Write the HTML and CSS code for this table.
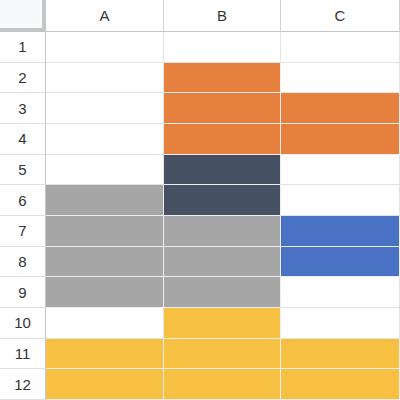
FILE: index.html
```html
<!DOCTYPE html>
<html lang="en">
<head>
<meta charset="utf-8">
<title>Sheet</title>
<link rel="stylesheet" href="styles.css">
</head>
<body>
<div class="sheet">
  <div class="corner"></div>
  <div class="colhead">A</div>
  <div class="colhead">B</div>
  <div class="colhead">C</div>

  <div class="rowhead">1</div><div class="cell"></div><div class="cell"></div><div class="cell"></div>
  <div class="rowhead">2</div><div class="cell"></div><div class="cell orange"></div><div class="cell"></div>
  <div class="rowhead">3</div><div class="cell"></div><div class="cell orange"></div><div class="cell orange"></div>
  <div class="rowhead">4</div><div class="cell"></div><div class="cell orange"></div><div class="cell orange"></div>
  <div class="rowhead">5</div><div class="cell"></div><div class="cell slate"></div><div class="cell"></div>
  <div class="rowhead">6</div><div class="cell gray"></div><div class="cell slate"></div><div class="cell"></div>
  <div class="rowhead">7</div><div class="cell gray"></div><div class="cell gray"></div><div class="cell blue"></div>
  <div class="rowhead">8</div><div class="cell gray"></div><div class="cell gray"></div><div class="cell blue"></div>
  <div class="rowhead">9</div><div class="cell gray"></div><div class="cell gray"></div><div class="cell"></div>
  <div class="rowhead">10</div><div class="cell"></div><div class="cell yellow"></div><div class="cell"></div>
  <div class="rowhead">11</div><div class="cell yellow"></div><div class="cell yellow"></div><div class="cell yellow"></div>
  <div class="rowhead">12</div><div class="cell yellow"></div><div class="cell yellow"></div><div class="cell yellow"></div>
</div>
</body>
</html>
```
FILE: styles.css
```css
html, body {
  margin: 0;
  padding: 0;
  background: #ffffff;
}

.sheet {
  width: 400px;
  height: 400px;
  display: grid;
  grid-template-columns: 46px 118px 117px 119px;
  grid-template-rows: 32px repeat(12, 1fr);
  font-family: "Liberation Sans", Arial, sans-serif;
  color: #333333;
}

.sheet > div {
  box-sizing: border-box;
  border-right: 1px solid #e2e3e3;
  border-bottom: 1px solid #e2e3e3;
}

.sheet > .corner {
  background: #f8f9fa;
  border-right: 4px solid #c4c7c5;
  border-bottom: 4px solid #c4c7c5;
}

.sheet > .colhead {
  display: flex;
  align-items: center;
  justify-content: center;
  font-size: 15px;
  border-right: 1px solid #d3d3d3;
  border-bottom: 1px solid #c4c7c5;
}

.sheet > .rowhead {
  display: flex;
  align-items: center;
  justify-content: center;
  font-size: 15px;
  border-right: 1px solid #c4c7c5;
  border-bottom: 1px solid #e0e0e0;
}

.orange { background: #e6803f; }
.slate { background: #465264; }
.gray { background: #a6a6a6; }
.blue { background: #4a72c4; }
.yellow { background: #f6c143; }

.sheet > .orange,
.sheet > .slate,
.sheet > .gray,
.sheet > .blue,
.sheet > .yellow {
  border-right-color: #eeeeee;
  border-bottom-color: #eeeeee;
}
```
